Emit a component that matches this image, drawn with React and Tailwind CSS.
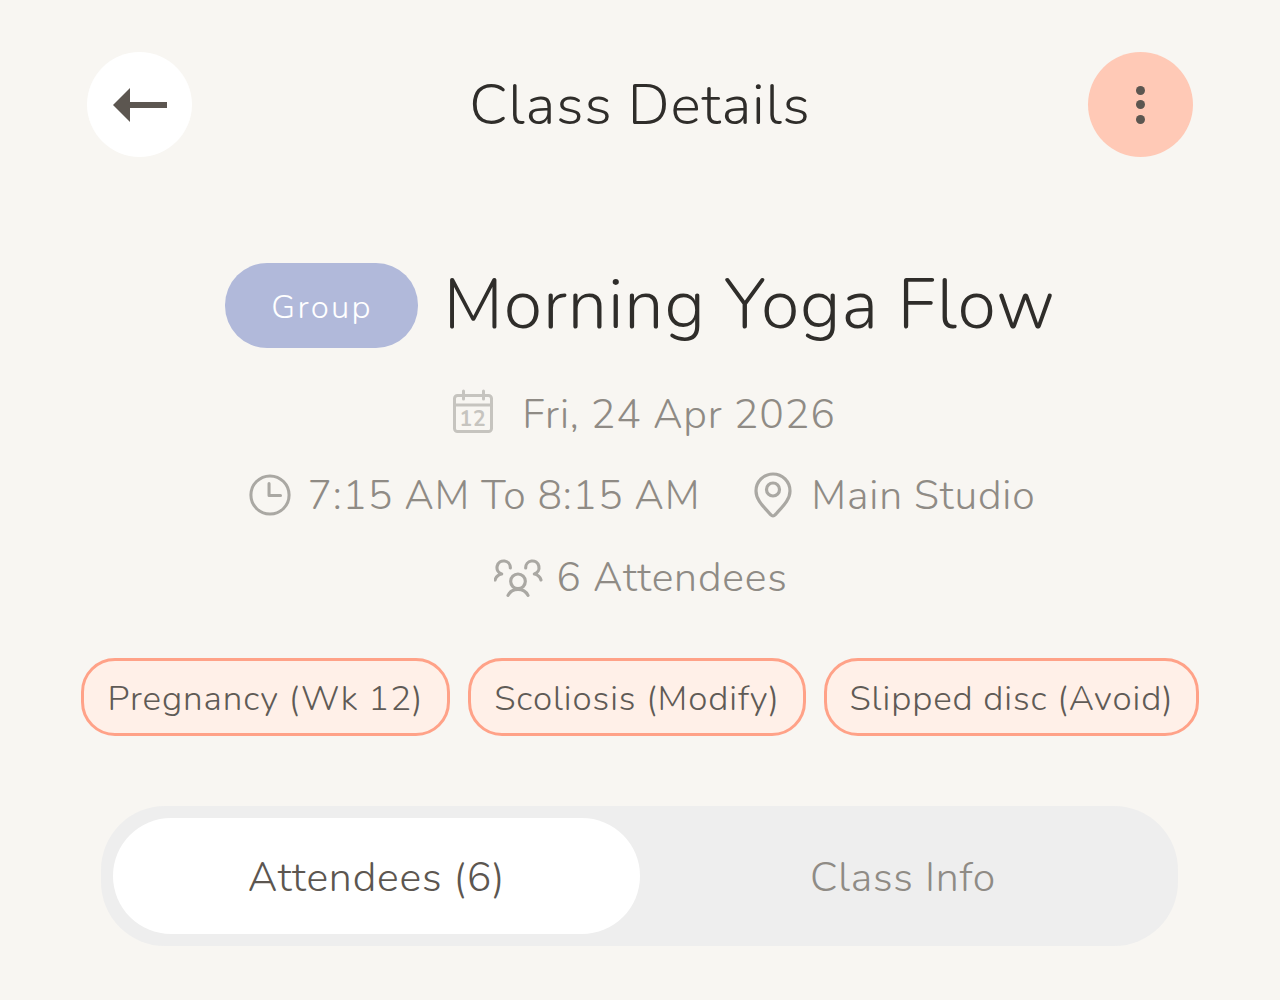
import React from "react";

const Calendar = () => (
  <svg width="42" height="46" viewBox="0 0 42 46" fill="none" stroke="#c6c4bf" strokeWidth="3" className="shrink-0 -mt-[6px]">
    <rect x="2.5" y="6.5" width="37" height="36" rx="3" />
    <path d="M2.5 16H39.5M11.5 2V10M31.5 2V10" strokeLinecap="round" />
    <text x="21" y="37" textAnchor="middle" fontSize="21" fontWeight="700" fill="#c6c4bf" stroke="none" fontFamily="Nunito, 'Noto Sans', sans-serif">12</text>
  </svg>
);

const Clock = () => (
  <svg width="42" height="42" viewBox="0 0 44 44" fill="none" stroke="#aaa8a3" strokeWidth="3.2" strokeLinecap="round" strokeLinejoin="round" className="shrink-0 -mt-[3px]">
    <circle cx="22" cy="22" r="20" />
    <path d="M21 10V22.5H33" />
  </svg>
);

const Pin = () => (
  <svg width="38" height="46" viewBox="0 0 38 46" fill="none" stroke="#aaa8a3" strokeWidth="3.2" strokeLinejoin="round" className="block -mt-[2px]">
    <path d="M19 44C18 44 17 43 16 42C10 35 2 28 2 19A17 17 0 0 1 36 19C36 28 28 35 22 42C21 43 20 44 19 44Z" />
    <circle cx="19" cy="17.5" r="6.5" />
  </svg>
);

const People = () => (
  <svg width="50" height="40" viewBox="27 20 150 120" fill="none" stroke="#aaa8a3" strokeWidth="9.5" strokeLinecap="round" strokeLinejoin="round" className="shrink-0">
    <circle cx="99" cy="90" r="22" />
    <path d="M69 132C76 118 86 114 99 114C112 114 122 118 129 132" />
    <path d="M76 50A20 20 0 1 0 50 68C40 70 33 76 30 86" />
    <path d="M122 50A20 20 0 1 1 148 68C158 70 165 76 168 86" />
  </svg>
);

const Tag = ({ children, w }) => (
  <div className={`h-[78px] ${w} shrink-0 rounded-[34px] border-[3px] border-[#ffa288] bg-[#fff0e8] flex items-center justify-center text-[35px] font-[360] text-[#5f5b56] tracking-[0.9px] pt-[4px]`}>
    {children}
  </div>
);

export default function App() {
  return (
    <div className="w-[1280px] h-[1000px] bg-[#f8f6f2] overflow-hidden flex flex-col items-center font-['Nunito','Noto_Sans',sans-serif]">
      <div className="w-[1106px] mt-[52px] flex items-center justify-between">
        <button className="w-[105px] h-[105px] rounded-full bg-white flex items-center justify-center">
          <svg width="54" height="34" viewBox="0 0 54 34">
            <path d="M0 17L17 0V14H54V20H17V34Z" fill="#5c5650" />
          </svg>
        </button>
        <h1 className="text-[57px] leading-[103px] text-[#2f2d2a] font-[360] tracking-[0.9px] pt-[2px]">Class Details</h1>
        <button className="w-[105px] h-[105px] rounded-full bg-[#ffc9b6] flex flex-col items-center justify-center gap-[5.5px]">
          <span className="w-[9px] h-[9px] rounded-full bg-[#5c5650]" />
          <span className="w-[9px] h-[9px] rounded-full bg-[#5c5650]" />
          <span className="w-[9px] h-[9px] rounded-full bg-[#5c5650]" />
        </button>
      </div>

      <div className="mt-[106px] ml-[1px] flex items-center gap-[25px]">
        <span className="w-[193px] h-[85px] rounded-[42px] bg-[#b1b9da] text-white text-[33px] font-[360] tracking-[2.2px] flex items-center justify-center pt-[4px]">Group</span>
        <h2 className="text-[70px] leading-[85px] text-[#2f2d2a] font-[360] tracking-[0.9px]">Morning Yoga Flow</h2>
      </div>

      <div className="mt-[43px] ml-[8px] h-[48px] flex items-center gap-[28px] text-[41px] font-[360] tracking-[0.85px] text-[#8f8b85]">
        <Calendar />
        <span>Fri, 24 Apr 2026</span>
      </div>

      <div className="mt-[33px] ml-[5px] h-[48px] flex items-center text-[41px] font-[360] tracking-[0.85px] text-[#8f8b85]">
        <Clock />
        <span className="ml-[16px] tracking-[0.75px]">7:15 AM To 8:15 AM</span>
        <span className="ml-[54px]"><Pin /></span>
        <span className="ml-[19px]">Main Studio</span>
      </div>

      <div className="mt-[34px] ml-[2px] h-[48px] flex items-center gap-[12px] text-[41px] font-[360] tracking-[0.85px] text-[#8f8b85]">
        <People />
        <span>6 Attendees</span>
      </div>

      <div className="mt-[56px] flex gap-[18px]">
        <Tag w="w-[369px]">Pregnancy (Wk 12)</Tag>
        <Tag w="w-[338px]">Scoliosis (Modify)</Tag>
        <Tag w="w-[375px]">Slipped disc (Avoid)</Tag>
      </div>

      <div className="mt-[70px] mr-[1px] w-[1077px] h-[140px] rounded-[64px] bg-[#eeeeee] p-[12px] flex">
        <div className="w-[527px] h-[116px] rounded-[58px] bg-white flex items-center justify-center text-[41px] font-[360] tracking-[0.85px] text-[#5c5650] pt-[4px]">Attendees (6)</div>
        <div className="flex-1 flex items-center justify-center text-[41px] font-[360] tracking-[0.8px] text-[#8f8b85] pt-[4px]">Class Info</div>
      </div>
    </div>
  );
}
